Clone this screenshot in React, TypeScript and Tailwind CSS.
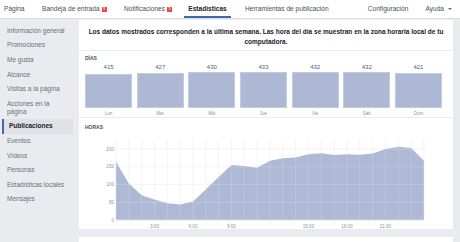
import React from "react";

const days = [
  { d: "Lun", v: 415 },
  { d: "Mar", v: 427 },
  { d: "Mié", v: 430 },
  { d: "Jue", v: 433 },
  { d: "Vie", v: 432 },
  { d: "Sáb", v: 432 },
  { d: "Dom", v: 421 },
];

const hours = [164, 103, 70, 58, 47, 44, 52, 86, 121, 155, 152, 147, 167, 174, 176, 185, 188, 183, 185, 184, 187, 200, 206, 203, 167];

const side = [
  "Información general",
  "Promociones",
  "Me gusta",
  "Alcance",
  "Visitas a la página",
  "Acciones en la página",
  "Publicaciones",
  "Eventos",
  "Vídeos",
  "Personas",
  "Estadísticas locales",
  "Mensajes",
];

const X = (h: number) => 37 + h * 12.83;
const Y = (v: number) => 90 - v * 0.355;

function HoursChart() {
  const pts = hours.map((v, i) => `${X(i).toFixed(2)},${Y(v).toFixed(2)}`).join(" ");
  const area = `${X(0)},${Y(0)} ${pts} ${X(24)},${Y(0)}`;
  return (
    <svg width="374" height="99" viewBox="0 0 374 99" className="block">
      {hours.map((_, i) => (
        <line key={"v" + i} x1={X(i)} x2={X(i)} y1={9} y2={92} stroke="#eceef1" strokeWidth="0.7" />
      ))}
      {[50, 100, 150, 200].map((v) => (
        <line key={"h" + v} x1={X(0)} x2={X(24)} y1={Y(v)} y2={Y(v)} stroke="#eceef1" strokeWidth="0.7" />
      ))}
      <polygon points={area} fill="#aeb9d5" />
      {hours.map((_, i) => (
        <line key={"w" + i} x1={X(i)} x2={X(i)} y1={9} y2={90} stroke="#ffffff" strokeOpacity="0.25" strokeWidth="0.7" />
      ))}
      {[50, 100, 150, 200].map((v) => (
        <line key={"hw" + v} x1={X(0)} x2={X(24)} y1={Y(v)} y2={Y(v)} stroke="#ffffff" strokeOpacity="0.25" strokeWidth="0.7" />
      ))}
      <line x1={X(0)} x2={X(24)} y1={90} y2={90} stroke="#dcdfe5" strokeWidth="0.8" />
      {[0, 50, 100, 150, 200].map((v) => (
        <text key={"t" + v} x={35} y={Y(v) + 1.6} textAnchor="end" fontSize="4.6" fill="#90949c" fontFamily="Liberation Sans, Arial, sans-serif">
          {v}
        </text>
      ))}
      {[
        [3, "3:00"],
        [6, "6:00"],
        [9, "9:00"],
        [15, "15:00"],
        [18, "18:00"],
        [21, "21:00"],
      ].map(([h, l]) => (
        <text key={"x" + h} x={X(h as number)} y={97.6} textAnchor="middle" fontSize="4.6" fill="#90949c" fontFamily="Liberation Sans, Arial, sans-serif">
          {l}
        </text>
      ))}
    </svg>
  );
}

function Badge() {
  return (
    <span className="ml-[2px] inline-flex h-[5px] w-[5px] items-center justify-center bg-[#fa3e3e] text-[4px] font-bold leading-none text-white">
      1
    </span>
  );
}

export default function App() {
  return (
    <div
      className="relative h-[242px] w-[460px] overflow-hidden bg-[#e9ebee] text-[#4b4f56]"
      style={{ fontFamily: "'Liberation Sans', Arial, sans-serif" }}
    >
      {/* Top nav */}
      <div className="flex h-[19px] items-stretch border-b border-[#dddfe2] bg-white text-[6.6px] leading-none text-[#4b4f56]">
        <div className="flex w-[42px] items-center pl-[4px]">Página</div>
        <div className="flex w-[82px] items-center">
          Bandeja de entrada
          <Badge />
        </div>
        <div className="flex w-[60px] items-center">
          Notificaciones
          <Badge />
        </div>
        <div className="flex w-[47px] items-center justify-center border-b-[2px] border-[#4267b2] pt-[2px] font-bold text-[#1d2129]">
          Estadísticas
        </div>
        <div className="ml-[14px] flex items-center">Herramientas de publicación</div>
        <div className="ml-auto flex items-center">Configuración</div>
        <div className="ml-[17px] mr-[8px] flex items-center">
          Ayuda
          <span className="ml-[4px] inline-block h-0 w-0 border-x-[2px] border-t-[2px] border-x-transparent border-t-[#606770]" />
        </div>
      </div>

      <div className="flex">
        {/* Sidebar */}
        <div className="w-[79px] shrink-0 pt-[4.5px]">
          {side.map((s) => {
            const active = s === "Publicaciones";
            const two = s === "Acciones en la página";
            return (
              <div
                key={s}
                className={
                  "ml-[2px] w-[71px] py-[3.3px] pl-[5px] text-[6.5px] leading-[8px] " +
                  (active
                    ? "border-l-[2px] border-[#4267b2] bg-[#dfe1e6] pl-[3px] font-bold text-[#1d2129]"
                    : "text-[#6b7079]")
                }
              >
                {two ? (
                  <>
                    Acciones en la
                    <br />
                    página
                  </>
                ) : (
                  s
                )}
              </div>
            );
          })}
        </div>

        {/* Main */}
        <div className="mr-[7px] flex-1">
          <div className="mt-[1px] h-[30px] bg-white pt-[7px] text-center text-[6.5px] font-bold leading-[10px] text-[#1d2129]">
            Los datos mostrados corresponden a la última semana. Las hora del día se muestran en la zona horaria local de tu
            <br />
            computadora.
          </div>

          <div className="mt-[1px] h-[66px] bg-white pl-[6px] pt-[4px]">
            <div className="h-[6px] text-[5px] font-bold leading-[6px] text-[#4b4f56]">DÍAS</div>
            <div className="mt-[3px] grid w-[357px] grid-cols-7 gap-x-[4.5px]">
              {days.map((d) => (
                <div key={d.d} className="flex flex-col items-center">
                  <div className="h-[7px] text-[6px] leading-[7px] text-[#4a5d8e]">{d.v}</div>
                  <div className="flex h-[37px] w-full items-end">
                    <div
                      className="w-full border border-[#c3cbe0] bg-[#adb8d4]"
                      style={{ height: `${(36 * d.v) / 433}px` }}
                    />
                  </div>
                  <div className="mt-[2.5px] h-[5px] text-[4.5px] leading-[5px] text-[#90949c]">{d.d}</div>
                </div>
              ))}
            </div>
          </div>

          <div className="mt-[1px] h-[111px] bg-white pt-[6px]">
            <div className="h-[6px] pl-[6px] text-[5px] font-bold leading-[6px] text-[#4b4f56]">HORAS</div>
            <HoursChart />
          </div>

          <div className="mt-[8px] h-[20px] bg-white" />
        </div>
      </div>
    </div>
  );
}
